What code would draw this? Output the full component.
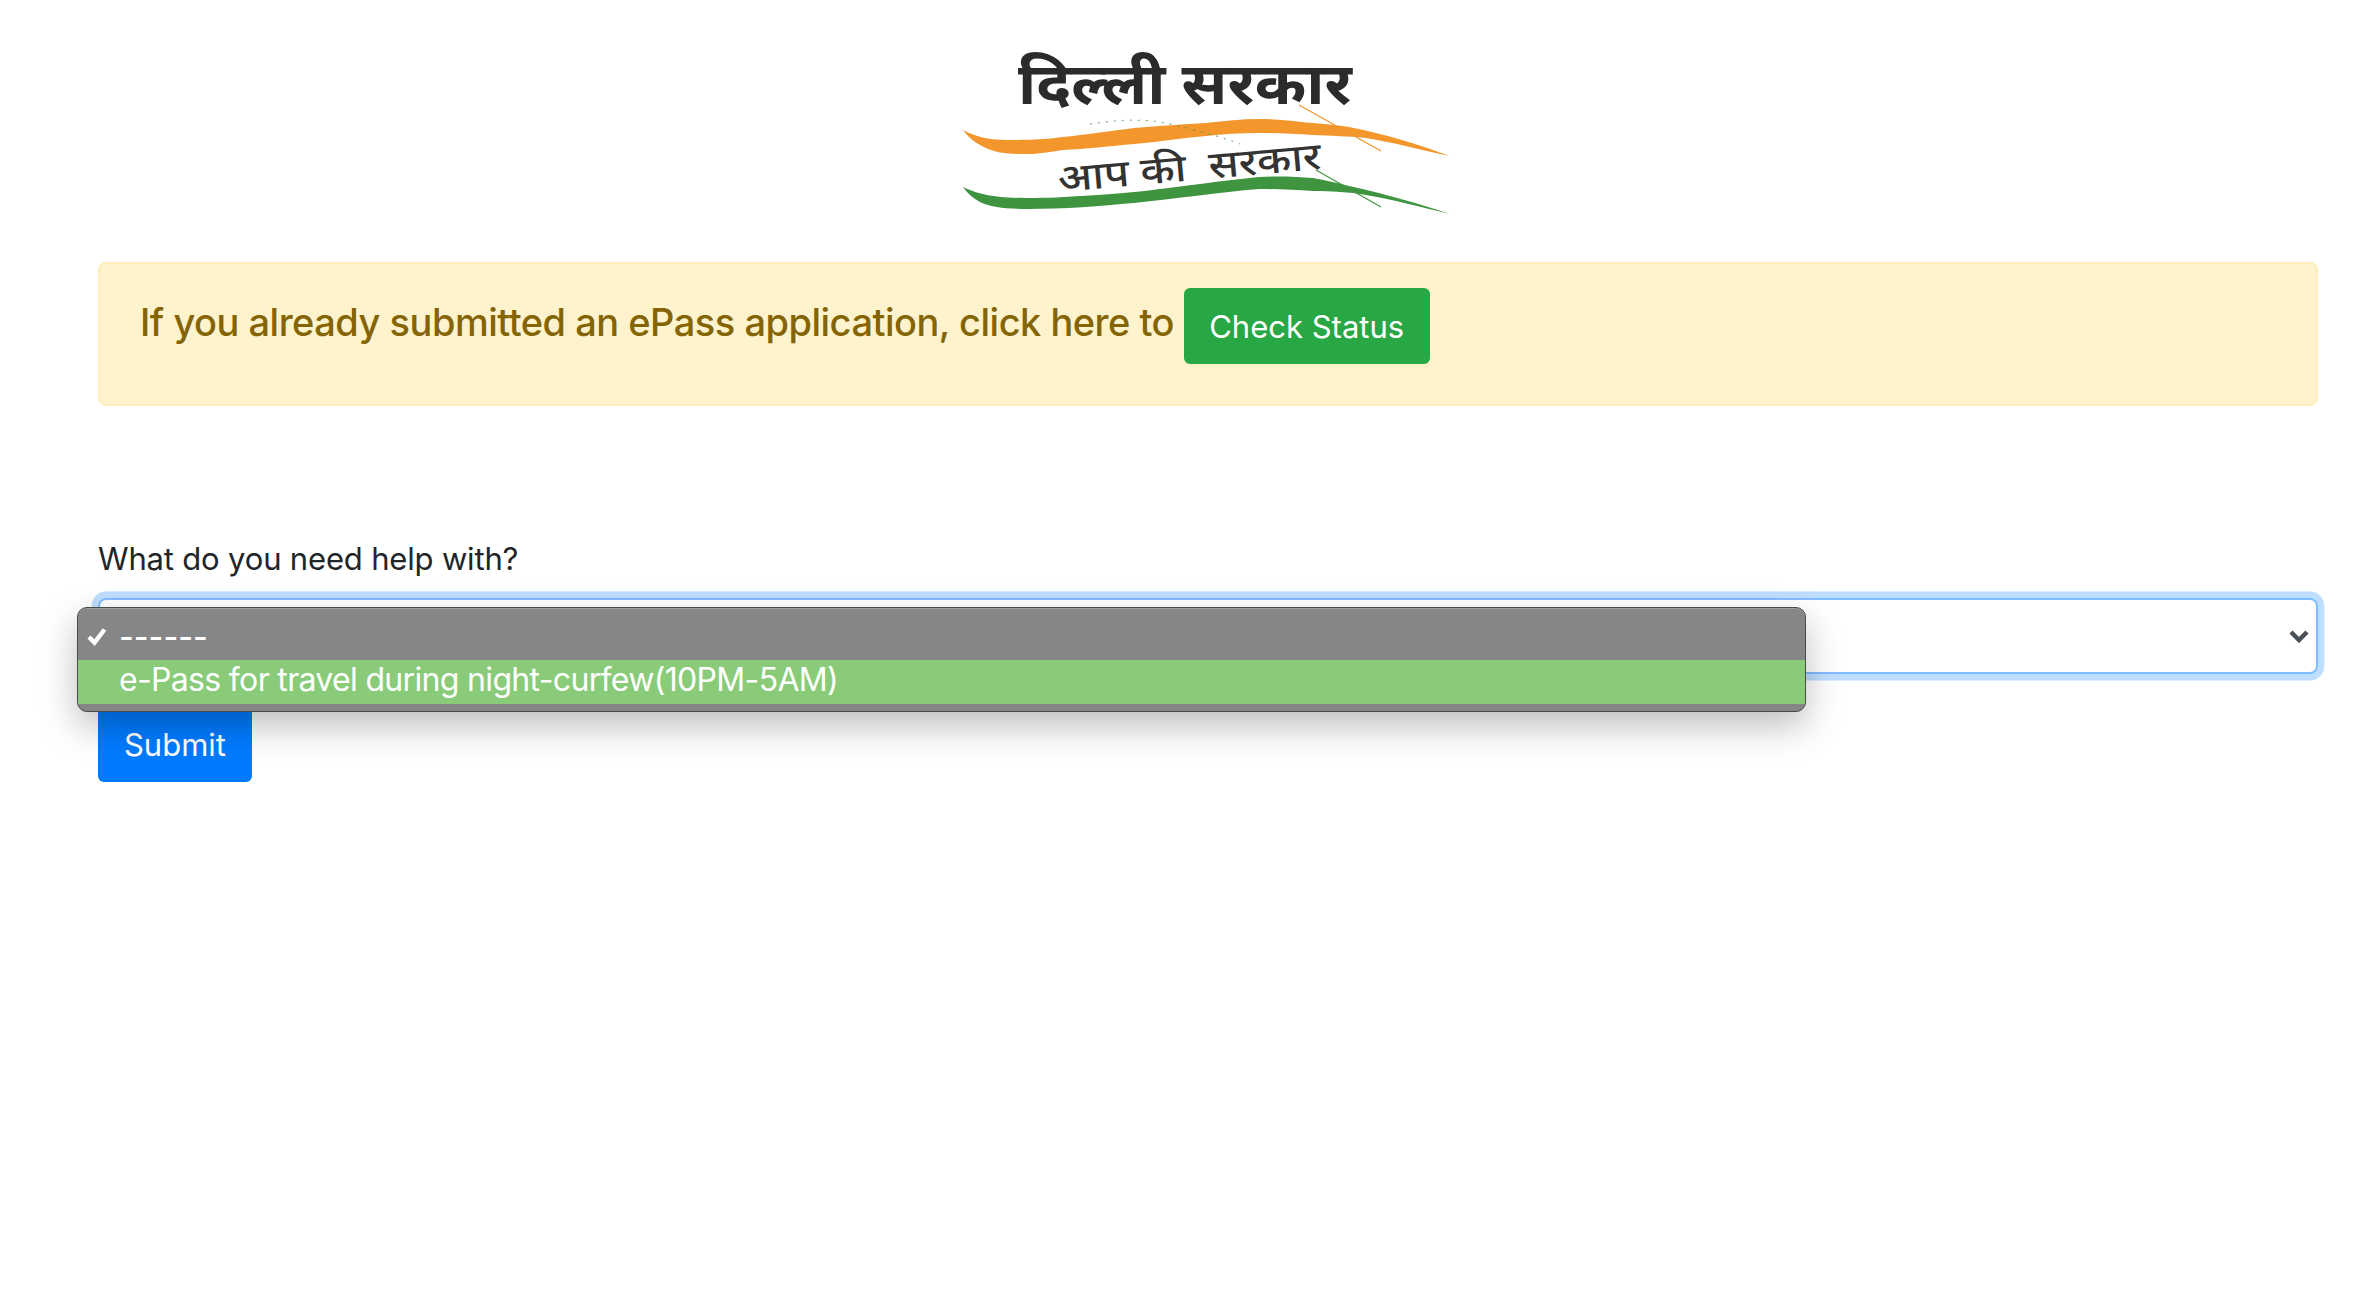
<script>
  const options = ['------', 'e-Pass for travel during night-curfew(10PM-5AM)'];
</script>

<div class="page">
  <div class="logo">
    <svg width="560" height="210" viewBox="0 0 560 210" xmlns="http://www.w3.org/2000/svg">
      <text class="logo-title" x="98" y="84" textLength="334" lengthAdjust="spacingAndGlyphs">दिल्ली सरकार</text>
      <path fill="#f3962c" d="M43 110C56 117 70 120 88 120C110 120 130 119 143 117C170 114 190 111 214 108C240 106 265 104 286 103C305 101 322 99 339 99C360 99 378 102 393 103C405 104 418 105 429 107C465 114 500 125 530 136C500 130 472 122 446 118C430 116 410 116 393 115C375 114 356 113 339 113C320 113 303 114 286 116C262 118 238 122 214 124C190 126 165 129 143 130C130 132 118 134 107 134C90 134 78 133 71 130C60 126 50 120 43 110Z"/>
      <path fill="#3f9440" d="M43 167C58 174 72 178 107 178C130 178 146 177 161 176C185 175 200 173 214 172C245 169 290 162 339 157C360 156 378 157 393 158C405 160 418 163 429 166C465 174 500 184 530 194C500 187 472 179 446 175C430 172 410 171 393 171C375 170 356 169 339 169C300 172 255 179 214 183C180 186 145 189 107 189C85 189 72 187 62 183C54 179 48 174 43 167Z"/>
      <path fill="none" stroke="#f3962c" stroke-width="1.2" d="M379 85L461 131"/>
      <path fill="none" stroke="#3f9440" stroke-width="1.2" d="M396 150L461 187"/>
      <path fill="none" stroke="#3f9440" stroke-width="1.2" stroke-dasharray="2 6" opacity="0.7" d="M170 104C195 100 225 98 250 104C275 110 300 116 320 124"/>
      <text class="logo-sub" x="139" y="172" transform="rotate(-5 139 172)" textLength="264" lengthAdjust="spacingAndGlyphs">आप की  सरकार</text>
    </svg>
  </div>

  <div class="alert">
    <h5>If you already submitted an ePass application, click here to <button class="btn green">Check Status</button></h5>
  </div>

  <div class="form-group">
    <div class="label">What do you need help with?</div>
    <div class="select">
      <svg class="chevron" width="20" height="14" viewBox="0 0 20 14" xmlns="http://www.w3.org/2000/svg">
        <path d="M2 3L10 11L18 3" fill="none" stroke="#495057" stroke-width="4.5"/>
      </svg>
    </div>
    <div class="menu">
      <div class="menu-item selected">
        <svg class="check" width="20" height="18" viewBox="0 0 20 18" xmlns="http://www.w3.org/2000/svg">
          <path d="M2 9L7.5 14.5L17.5 1.5" fill="none" stroke="#fff" stroke-width="4.5"/>
        </svg>
        {options[0]}
      </div>
      <div class="menu-item hover">{options[1]}</div>
    </div>
  </div>

  <button class="btn blue">Submit</button>
</div>

<style>
  :global(body) {
    background: #fff;
    font-family: Inter, "Liberation Sans", sans-serif;
  }

  .page {
    padding: 0 48px 0 98px;
    height: 1312px;
    box-sizing: border-box;
    color: #212529;
  }

  .logo {
    display: flex;
    justify-content: center;
    padding: 20px 16px 32px 0;
  }

  .logo svg {
    display: block;
  }

  .logo-title {
    font-family: "Noto Sans Devanagari", "Noto Sans", "DejaVu Sans", sans-serif;
    font-size: 58px;
    font-weight: 700;
    fill: #2b2b2b;
  }

  .logo-sub {
    font-family: "Noto Sans Devanagari", "Noto Sans", "DejaVu Sans", sans-serif;
    font-size: 38px;
    font-weight: 500;
    fill: #333;
    white-space: pre;
  }

  .alert {
    background: #fff3cd;
    border: 2px solid #ffeeba;
    border-radius: 8px;
    padding: 24px 40px;
    color: #856404;
    height: 144px;
    box-sizing: border-box;
  }

  h5 {
    margin: 0 0 16px;
    font-size: 38px;
    font-weight: 550;
    line-height: 1.2;
    letter-spacing: -0.5px;
  }

  .btn {
    height: 76px;
    border: none;
    border-radius: 6px;
    color: #fff;
    font-family: inherit;
    font-size: 31px;
    font-weight: 400;
    letter-spacing: 0;
    padding: 0;
    vertical-align: middle;
    white-space: nowrap;
  }

  .green {
    background: #28a745;
    width: 246px;
  }

  .blue {
    display: block;
    background: #007bff;
    width: 154px;
  }

  .form-group {
    position: relative;
    margin-top: 128px;
    margin-bottom: 32px;
  }

  .label {
    font-size: 31px;
    line-height: 50px;
    margin-bottom: 14px;
    letter-spacing: -0.17px;
  }

  .select {
    height: 76px;
    box-sizing: border-box;
    border: 2px solid #80bdff;
    border-radius: 8px;
    box-shadow: 0 0 0 6.4px rgba(0, 123, 255, 0.25);
    background: #fff;
    display: flex;
    align-items: center;
    justify-content: flex-end;
    padding-right: 7px;
  }

  .menu {
    position: absolute;
    left: -21px;
    top: 73px;
    width: 1729px;
    height: 105px;
    box-sizing: border-box;
    padding-top: 8px;
    background: #858687;
    border: 1px solid #4a4a4a;
    border-radius: 10px;
    box-shadow: 0 14px 36px rgba(0, 0, 0, 0.26), inset 0 1px 0 rgba(255, 255, 255, 0.2);
    overflow: hidden;
    color: #fff;
    font-size: 32px;
    letter-spacing: -0.67px;
  }

  .menu-item {
    display: flex;
    align-items: center;
    padding-left: 41px;
    position: relative;
  }

  .selected {
    height: 44px;
    letter-spacing: 0;
    padding-bottom: 4px;
    box-sizing: border-box;
    font-weight: 500;
  }

  .hover {
    height: 44px;
    background: #89cb79;
    padding-bottom: 5px;
    box-sizing: border-box;
  }

  .check {
    position: absolute;
    left: 9px;
    top: 12px;
  }
</style>
